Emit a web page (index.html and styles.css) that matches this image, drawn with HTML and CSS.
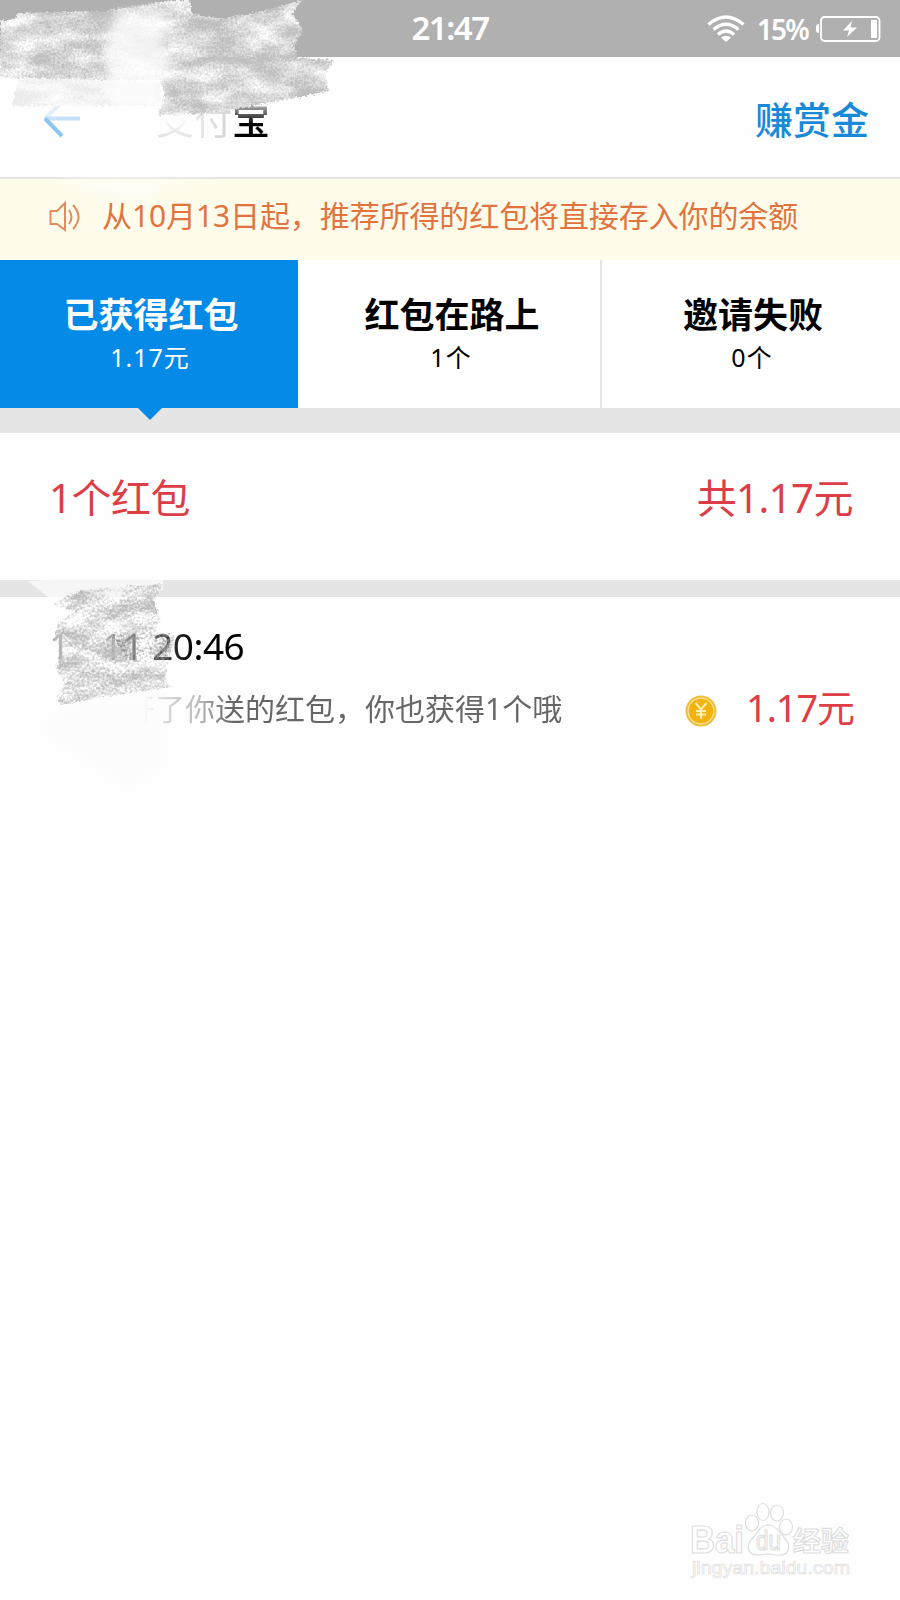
FILE: index.html
```html
<!DOCTYPE html>
<html lang="zh-CN">
<head>
<meta charset="utf-8">
<title>支付宝</title>
<link rel="stylesheet" href="styles.css">
</head>
<body>
<div class="page">
  <header class="status">
    <span class="clock">21:47</span>
    <div class="indicators">
      <svg class="wifi" width="38" height="28" viewBox="0 0 38 28" fill="none" stroke="#fff" stroke-width="3.200">
        <path d="M1.500 9.500Q19-5.500 36.500 9.500M6.500 14.500Q19 4 31.500 14.500M11 19.500Q19 12.500 27 19.500"/>
        <path d="M14 22.500Q19 19 24 22.500L19 27Z" fill="#fff" stroke="none"/>
      </svg>
      <span class="percent">15%</span>
      <svg class="battery" width="65" height="26" viewBox="0 0 65 26">
        <rect x="5" y="1" width="58.500" height="24" rx="3.500" fill="none" stroke="#fff" stroke-width="1.800"/>
        <path d="M3 8Q0 8 0 11V14Q0 17 3 17Z" fill="#fff"/>
        <rect x="55" y="4" width="6" height="18" fill="#fff"/>
        <path d="M36 5L27 14.500H33L31 21L41 11.500H34.500Z" fill="#fff"/>
      </svg>
    </div>
  </header>
  <nav class="nav">
    <svg class="back" width="38" height="38" viewBox="0 0 38 38" fill="none" stroke-width="4">
      <path d="M20 1L2 18.500" stroke="#e3f0fa"/><path d="M2 18.500H37" stroke="#c6e2f8"/><path d="M2 18.500L19 36" stroke="#8cc6f1"/>
    </svg>
    <h1 class="title"><span class="ghost">支</span><span class="faded">付</span><span class="solid">宝</span></h1>
    <a class="action">赚赏金</a>
  </nav>
  <div class="notice">
    <svg width="32" height="32" viewBox="0 0 32 32" fill="none" stroke="#e28c60" stroke-width="2">
      <path d="M1.500 10H8L16 2V29L8 23H1.500Z"/><path d="M20 9Q25 16 20 23M24 4Q35 16 24 28"/>
    </svg>
    <span>从10月13日起，推荐所得的红包将直接存入你的余额</span>
  </div>
  <div class="tabs">
    <div class="tab active"><strong>已获得红包</strong><span>1.17元</span></div>
    <div class="tab"><strong>红包在路上</strong><span>1个</span></div>
    <div class="tab"><strong>邀请失败</strong><span>0个</span></div>
  </div>
  <div class="gap gap-large"></div>
  <section class="summary"><span>1个红包</span><span>共1.17元</span></section>
  <div class="gap gap-small"></div>
  <section class="record">
    <div class="date"><span>12-11 20:46</span></div>
    <div class="row">
      <span class="desc">开了你送的红包，你也获得1个哦</span>
      <svg class="coin" width="32" height="32" viewBox="0 0 32 32" fill="none">
        <circle cx="16" cy="16" r="15.500" fill="#edc13e"/><circle cx="16" cy="16" r="12.800" fill="#f3b20e" stroke="#fbe39a" stroke-width="1.200"/>
        <path d="M10.500 8L16 14.500L21.500 8M16 14.500V24M11 16H21M11 19.500H21" stroke="#fff0b5" stroke-width="2"/>
      </svg>
      <span class="amount">1.17元</span>
    </div>
  </section>

  <svg class="scribble" width="400" height="820" viewBox="0 0 400 820">
    <defs>
      <filter id="chalk" x="0" y="0" width="400" height="820" filterUnits="userSpaceOnUse" color-interpolation-filters="sRGB">
        <feTurbulence type="fractalNoise" baseFrequency=".45" numOctaves="2" seed="7" result="n"/>
        <feTurbulence type="fractalNoise" baseFrequency=".025 .06" numOctaves="3" seed="3" result="b"/>
        <feComposite in="n" in2="b" operator="arithmetic" k2=".4" k3=".7" result="m"/>
        <feColorMatrix in="m" values="0 0 0 0 1  0 0 0 0 1  0 0 0 0 1  0 0 0 2.600 -1.050" result="w"/>
        <feDisplacementMap in="SourceGraphic" in2="n" scale="6" xChannelSelector="R" yChannelSelector="G" result="d"/>
        <feComposite in="w" in2="d" operator="in" result="g"/>
        <feMerge result="all"><feMergeNode in="d"/><feMergeNode in="g"/></feMerge>
        <feGaussianBlur in="all" stdDeviation=".5"/>
      </filter>
      <filter id="pencil" x="0" y="0" width="400" height="820" filterUnits="userSpaceOnUse" color-interpolation-filters="sRGB">
        <feTurbulence type="fractalNoise" baseFrequency=".4" numOctaves="2" seed="12" result="n"/>
        <feTurbulence type="fractalNoise" baseFrequency=".03 .07" numOctaves="3" seed="5" result="b"/>
        <feComposite in="n" in2="b" operator="arithmetic" k2=".6" k3=".6" result="m"/>
        <feColorMatrix in="m" values="0 0 0 0 0  0 0 0 0 0  0 0 0 0 0  0 0 0 2.800 -1.250" result="a"/>
        <feDisplacementMap in="SourceGraphic" in2="n" scale="6" xChannelSelector="R" yChannelSelector="G" result="d"/>
        <feComposite in="d" in2="a" operator="in" result="c"/>
        <feGaussianBlur in="c" stdDeviation=".5"/>
      </filter>
      <filter id="soft"><feGaussianBlur stdDeviation="6"/></filter>
    </defs>
    <g filter="url(#chalk)">
      <path d="M0 21L15 19L18 13L105 11L172 0H190L192 14L222 19L262 11L302 0L292 14L303 30L294 45L298 58L333 60L325 75L329 91L268 103L215 113L158 115L165 96L160 80L104 80L0 77Z" fill="#bfbfbf"/>
      <path d="M18 79L110 80L160 82V106H12Z" fill="#ebebeb"/>
    </g>
    <path d="M112 20Q145 5 168 16L162 47L175 62L160 82L164 110H110V70L103 60Z" fill="#fff" opacity=".8" filter="url(#soft)"/>
    <path d="M60 177H225L165 184L150 200L80 190Z" fill="#fff" opacity=".5" filter="url(#soft)"/>
    <path d="M28 581L60 579H163V590L130 597H48Z" fill="#fafafa" opacity=".8"/>
    <g filter="url(#pencil)">
      <path d="M80 591L163 584L154 600L160 620L155 630L175 637L168 662L165 680L171 687L115 695L60 705L57 696L65 682L57 672L59 650L55 632L61 620L75 612L53 604Z" fill="#bbb"/>
      <path d="M110 632L170 634L166 660L130 662Z" fill="#999"/>
    </g>
    <path d="M35 728L80 704L165 696V764L130 790Z" fill="#f8f8f8" opacity=".3" filter="url(#soft)"/>
  </svg>

  <svg class="watermark" width="180" height="92" viewBox="0 0 180 92">
    <g fill="#fff" stroke="#dedede" stroke-width="1.200">
      <ellipse cx="62" cy="24" rx="6.500" ry="8"/>
      <ellipse cx="73" cy="13" rx="6" ry="8.500"/><ellipse cx="87" cy="14" rx="6.500" ry="8"/><ellipse cx="96" cy="28" rx="6.500" ry="8"/>
      <path d="M78 26C69 27 67 35 61 41C55 48 59 56 68 56C74 56 74 55 78 55C84 55 85 57 91 56C99 56 101 47 96 41C90 34 88 27 78 26Z"/>
      <text class="mark-bai" x="0" y="54" textLength="54" lengthAdjust="spacingAndGlyphs">Bai</text>
      <text class="mark-du" x="66" y="51" textLength="25" lengthAdjust="spacingAndGlyphs">du</text>
      <text class="mark-cn" x="103" y="52" textLength="56" lengthAdjust="spacingAndGlyphs">经验</text>
      <text class="mark-url" x="2" y="75" textLength="158" lengthAdjust="spacingAndGlyphs">jingyan.baidu.com</text>
    </g>
  </svg>
</div>
</body>
</html>
```
FILE: styles.css
```css
* { box-sizing: border-box; }
body { margin: 0; background: #fefefe; font-family: "Noto Sans", "Noto Sans CJK SC", sans-serif; color: #000; }
.page { position: relative; width: 900px; height: 1600px; overflow: hidden; background: #fefefe; }
.status { display: grid; grid-template-columns: 1fr auto 1fr; height: 57px; align-items: center; background: #b0b0b0; color: #fff; line-height: 56px; }
.clock { grid-column: 2; font-size: 33px; font-weight: 600; letter-spacing: -1.500px; height: 57px; }
.indicators { display: flex; justify-content: flex-end; align-items: center; padding-right: 19px; }
.percent { margin: 0 8px 0 12px; font-size: 28px; font-weight: 600; letter-spacing: -1.800px; }
.nav { display: flex; align-items: center; height: 122px; padding: 3px 31px 0 43px; border-bottom: 2px solid #e3e3e1; }
.title { margin: 0 0 0 75px; font-size: 38px; font-weight: 400; line-height: 56px; }
.title span { color: transparent; -webkit-background-clip: text; background-clip: text; }
.title .ghost { background-image: linear-gradient(#fff 45%, #d9d9d9); }
.title .faded { background-image: linear-gradient(100deg, #eee, #d0d0d0); }
.title .solid { background-image: linear-gradient(#aaa 25%, #000 60%); font-weight: 500; }
.action { margin-left: auto; font-size: 38px; line-height: 56px; color: #198ad8; font-weight: 500; }
.notice { display: flex; align-items: center; gap: 21px; height: 81px; padding: 0 49px 5px; background: #fffcec; font-size: 30px; line-height: 44px; color: #e1743e; white-space: nowrap; }
.notice span { letter-spacing: -.1px; margin-top: -2px; }
.tabs { display: grid; grid-template-columns: 300px 302px 298px; height: 148px; }
.tab { display: flex; flex-direction: column; align-items: center; padding-top: 31px; border-right: 2px solid #e5e5e5; background: #fff; }
.tab:last-child { border-right: 0; }
.tab strong { font-size: 35px; line-height: 48px; padding-left: 4px; }
.tab span { font-size: 25px; line-height: 36px; letter-spacing: 1px; padding-left: 2px; }
.tab.active { position: relative; width: 298px; background: #058ae8; color: #fff; border-right: 0; }
.tab.active::after { content: ""; position: absolute; left: 138px; top: 148px; border: solid transparent; border-width: 12px 12px 0; border-top-color: #058ae8; }
.gap { background: #e5e5e5; }
.gap-large { height: 25px; }
.gap-small { height: 17px; }
.summary { display: flex; justify-content: space-between; height: 147px; padding: 36px 47px 0 49px; font-size: 40px; line-height: 58px; letter-spacing: -.5px; color: #dc3d46; }
.record { padding: 22px 46px 0 49px; }
.date { font-size: 37px; line-height: 54px; letter-spacing: -.5px; white-space: nowrap; }
.date span { color: transparent; background: linear-gradient(90deg, #aaa 0, #bbb 18px, #e6e6e6 28px, #e6e6e6 50px, #999 62px, #777 85px, #444 115px, #000 145px); -webkit-background-clip: text; background-clip: text; }
.row { display: flex; align-items: center; height: 64px; margin-top: 4px; }
.desc { margin-left: 76px; font-size: 30px; line-height: 44px; color: transparent; background: linear-gradient(90deg, #fefefe 18px, #ddd 34px, #b9b9b9 75px, #666 105px); -webkit-background-clip: text; background-clip: text; }
.coin { margin: 4px 29px 0 auto; }
.amount { margin-top: -4px; font-size: 38px; line-height: 54px; letter-spacing: -1.100px; color: #e03d46; }
.scribble { position: absolute; left: 0; top: 0; pointer-events: none; }
.watermark { position: absolute; left: 690px; top: 1499px; }
.mark-bai { font: 700 38px "Liberation Sans", sans-serif; }
.mark-du { font: 400 27px "Liberation Sans", sans-serif; }
.mark-cn { font: 700 27px "Noto Sans CJK SC", sans-serif; }
.mark-url { font: 400 18px "Liberation Sans", sans-serif; stroke-width: .7px; }
```
